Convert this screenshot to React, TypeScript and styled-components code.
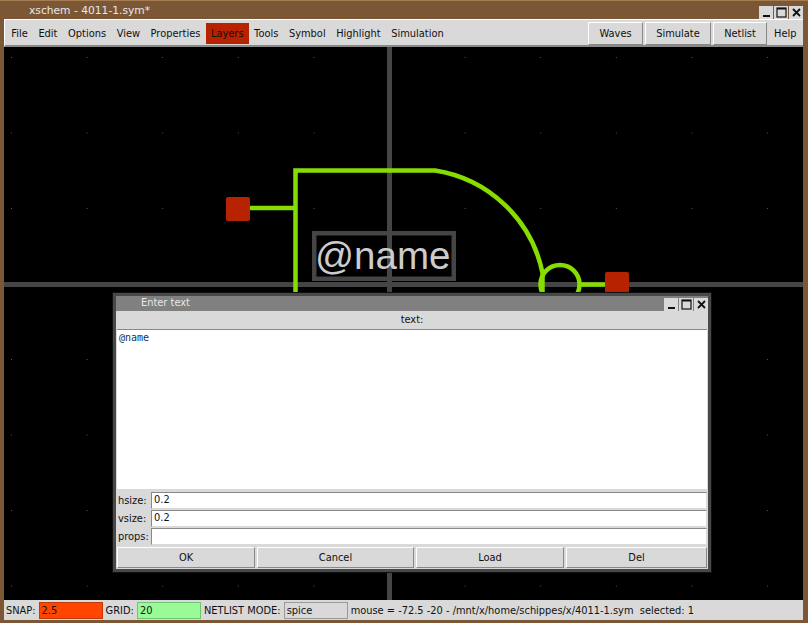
import React from 'react'
import styled, { createGlobalStyle } from 'styled-components'

const GlobalStyle = createGlobalStyle`
  html, body {
    margin: 0;
    padding: 0;
    background: #7b5736;
  }
`

const Window = styled.div`
  position: relative;
  box-sizing: border-box;
  width: 808px;
  height: 623px;
  overflow: hidden;
  display: flex;
  flex-direction: column;
  padding: 0 5px 3px 4px;
  background: #7b5736;
  border-top: 1px solid #a67c52;
  font-family: 'DejaVu Sans', sans-serif;
  font-size: 9.85px;
  color: #111;
`

const TitleBar = styled.div`
  height: 18px;
  flex: none;
  display: flex;
  align-items: center;
  padding-left: 25px;
  color: #e8e8e8;
  font-size: 10.7px;
`

const WindowButtons = styled.div`
  margin-left: auto;
  display: flex;
  gap: 1px;
  align-self: flex-end;
  height: 13px;
`

const WindowButton = styled.div`
  width: 14px;
  height: 13px;
  background: #d9d9d9;
  svg {
    display: block;
    margin: 0 auto;
  }
`

const MenuBar = styled.div`
  box-sizing: border-box;
  height: 28px;
  flex: none;
  display: flex;
  align-items: flex-start;
  padding: 3px 0 0 1px;
  background: #d9d9d9;
  border-top: 1px solid #fff;
  border-left: 1px solid #fff;
  border-bottom: 2px solid #888;
`

const MenuItem = styled.div<{ $active?: boolean }>`
  box-sizing: border-box;
  height: 21px;
  line-height: 21px;
  padding: 0 5.3px;
  background: ${(p) => (p.$active ? '#b72200' : 'transparent')};
`

const MenuSpacer = styled.div`
  flex: 1;
`

const ToolButton = styled.div<{ $width: number }>`
  box-sizing: border-box;
  width: ${(p) => p.$width}px;
  height: 23px;
  margin: -1px 2px 0 0;
  line-height: 21px;
  text-align: center;
  background: #d9d9d9;
  border: 1px solid;
  border-color: #fff #888 #888 #fff;
`

const HelpItem = styled(MenuItem)`
  width: 34px;
  padding: 0 6px 0 5px;
`

const Canvas = styled.div`
  position: relative;
  flex: 1;
  min-height: 0;
  background: #000;
`

const Schematic = styled.svg`
  position: absolute;
  left: 0;
  top: 0;
  display: block;
`

const Dialog = styled.div`
  position: absolute;
  left: 109px;
  top: 246px;
  box-sizing: border-box;
  width: 598px;
  height: 279px;
  display: flex;
  flex-direction: column;
  background: #d9d9d9;
  border: 3px solid #484848;
  box-shadow: 0 0 0 1px #111;
`

const DialogTitle = styled.div`
  height: 15px;
  flex: none;
  display: flex;
  align-items: center;
  padding-left: 25px;
  background: #808080;
  color: #e8e8e8;
  line-height: 13px;
`

const DialogTitleText = styled.span`
  margin-bottom: 2px;
`

const DialogButtons = styled.div`
  margin-left: auto;
  display: flex;
  gap: 1px;
  height: 13px;
  align-self: flex-end;
`

const TextLabel = styled.div`
  height: 18px;
  flex: none;
  line-height: 17px;
  text-align: center;
`

const TextBody = styled.div`
  box-sizing: border-box;
  height: 160px;
  flex: none;
  margin: 0 1px;
  padding: 1px 0 0 2px;
  background: #fff;
  border-top: 1px solid #888;
  font-family: 'DejaVu Sans Mono', monospace;
  font-size: 10px;
  line-height: 13px;
  color: #12325c;
`

const Fields = styled.div`
  display: flex;
  flex-direction: column;
  margin-top: 2px;
`

const FieldRow = styled.div`
  height: 18px;
  display: flex;
  align-items: center;
`

const FieldLabel = styled.div`
  box-sizing: border-box;
  width: 35px;
  padding-left: 2px;
  flex: none;
`

const FieldInput = styled.div`
  box-sizing: border-box;
  flex: 1;
  height: 17px;
  margin-right: 1px;
  padding-left: 2px;
  line-height: 13px;
  background: #fff;
  border: 1px solid;
  border-color: #888 #d9d9d9 #d9d9d9 #888;
`

const DialogActions = styled.div`
  display: grid;
  grid-template-columns: 138px 157px 148px 141px;
  column-gap: 2px;
  margin: 2px 1px 0;
`

const DialogAction = styled.div`
  box-sizing: border-box;
  height: 21px;
  line-height: 19px;
  text-align: center;
  background: #d9d9d9;
  border: 1px solid;
  border-color: #fff #888 #888 #fff;
`

const StatusBar = styled.div`
  box-sizing: border-box;
  height: 20px;
  flex: none;
  display: flex;
  align-items: center;
  padding-left: 2px;
  background: #d9d9d9;
  white-space: pre;
`

const StatusEntry = styled.div<{ $bg: string; $line: string }>`
  box-sizing: border-box;
  width: 64px;
  height: 17px;
  margin: 0 3px;
  padding-left: 2px;
  line-height: 15px;
  background: ${(p) => p.$bg};
  border: 1px solid ${(p) => p.$line};
`

const menuItems = ['File', 'Edit', 'Options', 'View', 'Properties', 'Layers', 'Tools', 'Symbol', 'Highlight', 'Simulation']

const gridDots: [number, number][] = []
for (let i = 0; i < 11; i++) {
  for (let j = 0; j < 8; j++) {
    gridDots.push([11 + i * 75.6, 57 + j * 75.5])
  }
}

function MinimizeIcon() {
  return (
    <svg width="13" height="13" viewBox="0 0 13 13">
      <rect x="3" y="9" width="7" height="2" fill="#111" />
    </svg>
  )
}

function MaximizeIcon() {
  return (
    <svg width="13" height="13" viewBox="0 0 13 13">
      <rect x="2" y="2" width="9" height="9" fill="none" stroke="#111" strokeWidth="1.2" />
      <rect x="2" y="2" width="9" height="1.5" fill="#111" />
    </svg>
  )
}

function CloseIcon() {
  return (
    <svg width="13" height="13" viewBox="0 0 13 13">
      <path d="M3 3 L10 10 M10 3 L3 10" stroke="#111" strokeWidth="1.8" />
    </svg>
  )
}

function WindowControls() {
  return (
    <>
      <WindowButton>
        <MinimizeIcon />
      </WindowButton>
      <WindowButton>
        <MaximizeIcon />
      </WindowButton>
      <WindowButton>
        <CloseIcon />
      </WindowButton>
    </>
  )
}

function SchematicDrawing() {
  return (
    <Schematic width="799" height="553" viewBox="4 47 799 553">
      {gridDots.map(([x, y]) => (
        <rect key={`${x}-${y}`} x={x} y={y} width="1" height="1" fill="#555" />
      ))}
      <path d="M389.5 47 V600 M4 284.5 H803" stroke="#454545" strokeWidth="5" fill="none" />
      <rect x="314.25" y="233.25" width="139.5" height="45.5" fill="none" stroke="#454545" strokeWidth="4.5" />
      <text x="315" y="269" fontFamily="'Liberation Sans', sans-serif" fontSize="38.5" fill="#cccccc">
        @name
      </text>
      <g fill="none" stroke="#88dd00" strokeWidth="4.5">
        <path d="M295.5 296 V170.5 H435 A130 130 0 0 1 542.5 273 V296" />
        <path d="M238 208 H295" />
        <path d="M580 284.5 H617" />
        <circle cx="560" cy="284.5" r="19.5" />
      </g>
      <rect x="226" y="197" width="24" height="24" rx="2" fill="#b72200" />
      <rect x="605" y="272" width="24" height="24" rx="2" fill="#b72200" />
    </Schematic>
  )
}

export default function App() {
  return (
    <>
      <GlobalStyle />
      <Window>
        <TitleBar>
          xschem - 4011-1.sym*
          <WindowButtons>
            <WindowControls />
          </WindowButtons>
        </TitleBar>
        <MenuBar>
          {menuItems.map((item) => (
            <MenuItem key={item} $active={item === 'Layers'}>
              {item}
            </MenuItem>
          ))}
          <MenuSpacer />
          <ToolButton $width={55}>Waves</ToolButton>
          <ToolButton $width={66}>Simulate</ToolButton>
          <ToolButton $width={54}>Netlist</ToolButton>
          <HelpItem>Help</HelpItem>
        </MenuBar>
        <Canvas>
          <SchematicDrawing />
          <Dialog>
            <DialogTitle>
              <DialogTitleText>Enter text</DialogTitleText>
              <DialogButtons>
                <WindowControls />
              </DialogButtons>
            </DialogTitle>
            <TextLabel>text:</TextLabel>
            <TextBody>@name</TextBody>
            <Fields>
              <FieldRow>
                <FieldLabel>hsize:</FieldLabel>
                <FieldInput>0.2</FieldInput>
              </FieldRow>
              <FieldRow>
                <FieldLabel>vsize:</FieldLabel>
                <FieldInput>0.2</FieldInput>
              </FieldRow>
              <FieldRow>
                <FieldLabel>props:</FieldLabel>
                <FieldInput />
              </FieldRow>
            </Fields>
            <DialogActions>
              <DialogAction>OK</DialogAction>
              <DialogAction>Cancel</DialogAction>
              <DialogAction>Load</DialogAction>
              <DialogAction>Del</DialogAction>
            </DialogActions>
          </Dialog>
        </Canvas>
        <StatusBar>
          SNAP:
          <StatusEntry $bg="#ff4500" $line="#c23a0c">2.5</StatusEntry>
          GRID:
          <StatusEntry $bg="#98fb98" $line="#6fc46f">20</StatusEntry>
          NETLIST MODE:
          <StatusEntry $bg="#d9d9d9" $line="#999">spice</StatusEntry>
          mouse = -72.5 -20 - /mnt/x/home/schippes/x/4011-1.sym  selected: 1
        </StatusBar>
      </Window>
    </>
  )
}
